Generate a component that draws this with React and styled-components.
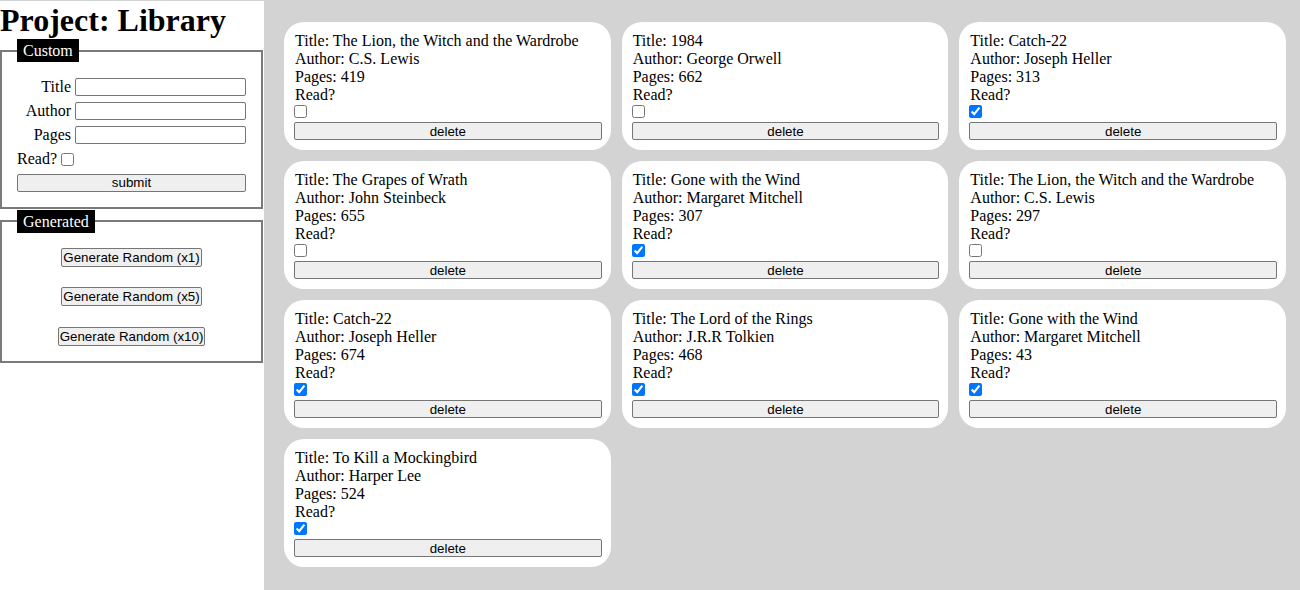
import React from "react";
import styled, { createGlobalStyle } from "styled-components";

const GlobalStyle = createGlobalStyle`
  html, body {
    margin: 0;
    padding: 0;
    background-color: lightgray;
    font-family: "Liberation Serif", "Times New Roman", serif;
  }
`;

const Page = styled.div`
  display: grid;
  grid-template-columns: 264px 1fr;
  min-height: 590px;
`;

const Sidebar = styled.div`
  background-color: white;
  margin-top: 1px;
  padding-top: 1px;
  align-self: stretch;
`;

const Heading = styled.h1`
  margin: 0;
  font-size: 32px;
  line-height: 37px;
  font-weight: bold;
`;

const StyledFieldset = styled.fieldset`
  margin: 0;
  width: 263px;
  box-sizing: border-box;
  border: 2px solid #7a7a7a;
  padding: 0 15px ${props => props.bottom || 15}px 15px;
  & + & {
    margin-top: 1px;
  }
`;

const Legend = styled.legend`
  background-color: black;
  color: white;
  padding: 2px 6px 2px;
  font-size: 16px;
  line-height: 19px;
  margin-left: 0;
`;

const FormGrid = styled.div`
  display: grid;
  grid-template-columns: 54px 171px;
  column-gap: 4px;
  row-gap: 6px;
  align-items: center;
  margin-top: 16px;
`;

const Label = styled.label`
  text-align: right;
  font-size: 16px;
  line-height: 18px;
`;

const TextInput = styled.input`
  box-sizing: border-box;
  height: 18px;
  width: 171px;
  border: 1px solid #767676;
  border-radius: 2px;
  padding: 1px 2px;
  margin: 0;
`;

const ReadRow = styled.div`
  display: flex;
  align-items: center;
  gap: 4px;
  margin-top: 6px;
  font-size: 16px;
  line-height: 18px;
`;

const Check = styled.input.attrs({ type: "checkbox" })`
  width: 13px;
  height: 13px;
  margin: ${props => props.m || "0"};
  display: ${props => (props.block ? "block" : "inline-block")};
`;

const FormButton = styled.button`
  box-sizing: border-box;
  font-family: "Liberation Sans", Arial, sans-serif;
  font-size: 13.333px;
  line-height: 15px;
  color: black;
  background-color: #efefef;
  border: 1px solid #767676;
  border-radius: 2px;
  height: ${props => props.h || 18}px;
  padding: 0 ${props => (props.tight ? 1 : 6)}px;
  margin: 0;
  width: ${props => (props.full ? "100%" : "auto")};
`;

const SubmitWrap = styled.div`
  margin-top: 5px;
`;

const GenerateList = styled.div`
  display: flex;
  flex-direction: column;
  align-items: center;
  gap: 20.5px;
  margin-top: 15px;
`;

const Main = styled.main`
  display: grid;
  grid-template-columns: repeat(3, 1fr);
  align-content: start;
  gap: 11px;
  padding: 22px 14px 20px 20px;
`;

const Card = styled.div`
  background-color: white;
  border-radius: 20px;
  padding: 10px 9px 10px 10px;
  font-size: 16px;
  line-height: 18px;
`;

const CardLine = styled.div`
  padding-left: 1px;
`;

const books = [
  { title: "The Lion, the Witch and the Wardrobe", author: "C.S. Lewis", pages: 419, read: false },
  { title: "1984", author: "George Orwell", pages: 662, read: false },
  { title: "Catch-22", author: "Joseph Heller", pages: 313, read: true },
  { title: "The Grapes of Wrath", author: "John Steinbeck", pages: 655, read: false },
  { title: "Gone with the Wind", author: "Margaret Mitchell", pages: 307, read: true },
  { title: "The Lion, the Witch and the Wardrobe", author: "C.S. Lewis", pages: 297, read: false },
  { title: "Catch-22", author: "Joseph Heller", pages: 674, read: true },
  { title: "The Lord of the Rings", author: "J.R.R Tolkien", pages: 468, read: true },
  { title: "Gone with the Wind", author: "Margaret Mitchell", pages: 43, read: true },
  { title: "To Kill a Mockingbird", author: "Harper Lee", pages: 524, read: true }
];

export default function App() {
  return (
    <Page>
      <GlobalStyle />
      <Sidebar>
        <Heading>Project: Library</Heading>
        <StyledFieldset>
          <Legend>Custom</Legend>
          <FormGrid>
            <Label>Title</Label>
            <TextInput name="title" />
            <Label>Author</Label>
            <TextInput name="author" />
            <Label>Pages</Label>
            <TextInput name="pages" />
          </FormGrid>
          <ReadRow>
            Read? <Check m="0" />
          </ReadRow>
          <SubmitWrap>
            <FormButton full>submit</FormButton>
          </SubmitWrap>
        </StyledFieldset>
        <StyledFieldset bottom={15}>
          <Legend>Generated</Legend>
          <GenerateList>
            <FormButton tight h={19}>Generate Random (x1)</FormButton>
            <FormButton tight h={19}>Generate Random (x5)</FormButton>
            <FormButton tight h={19}>Generate Random (x10)</FormButton>
          </GenerateList>
        </StyledFieldset>
      </Sidebar>
      <Main>
        {books.map((book, i) => (
          <Card key={i}>
            <CardLine>Title: {book.title}</CardLine>
            <CardLine>Author: {book.author}</CardLine>
            <CardLine>Pages: {book.pages}</CardLine>
            <CardLine>Read?</CardLine>
            <Check block m="1px 0 3.6px 0" defaultChecked={book.read} />
            <FormButton full>delete</FormButton>
          </Card>
        ))}
      </Main>
    </Page>
  );
}
